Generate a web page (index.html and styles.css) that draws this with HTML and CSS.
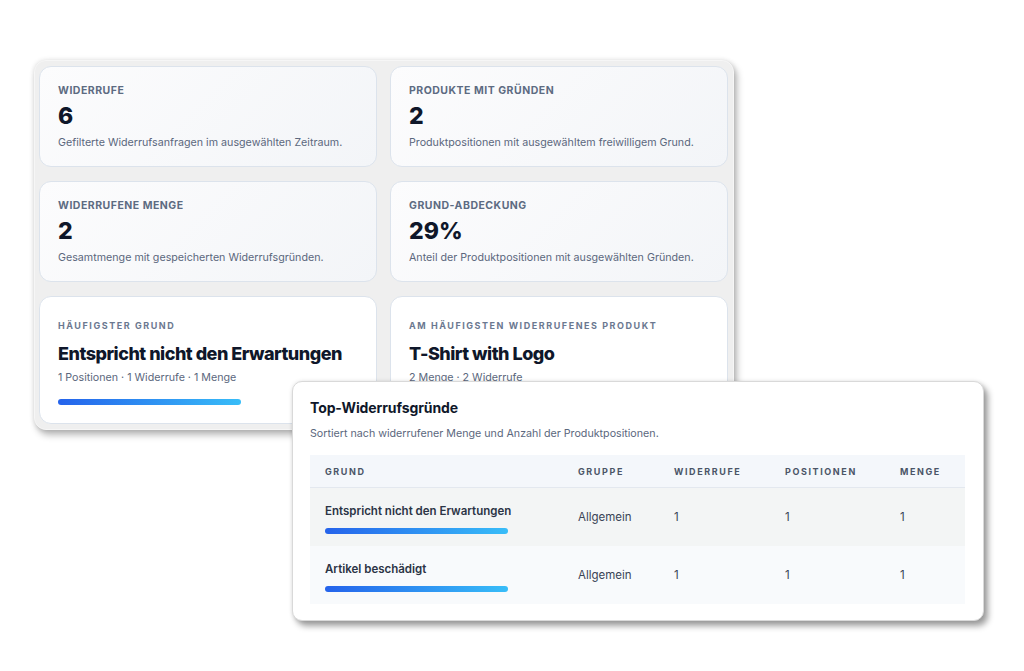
FILE: index.html
```html
<!DOCTYPE html>
<html lang="de">
<head>
<meta charset="utf-8">
<title>Widerrufsgründe – Übersicht</title>
<link rel="stylesheet" href="styles.css">
</head>
<body>
	<div class="stage">
		<!-- Kennzahlen-Fenster -->
		<div class="window window-stats">
			<div class="stats">
				<div class="card">
					<div class="card-label">Widerrufe</div>
					<div class="card-value">6</div>
					<div class="card-desc">Gefilterte Widerrufsanfragen im ausgewählten Zeitraum.</div>
				</div>
				<div class="card">
					<div class="card-label">Produkte mit Gründen</div>
					<div class="card-value">2</div>
					<div class="card-desc">Produktpositionen mit ausgewähltem freiwilligem Grund.</div>
				</div>
				<div class="card">
					<div class="card-label">Widerrufene Menge</div>
					<div class="card-value">2</div>
					<div class="card-desc">Gesamtmenge mit gespeicherten Widerrufsgründen.</div>
				</div>
				<div class="card">
					<div class="card-label">Grund-Abdeckung</div>
					<div class="card-value">29%</div>
					<div class="card-desc">Anteil der Produktpositionen mit ausgewählten Gründen.</div>
				</div>
				<div class="card card-top">
					<div class="top-label">Häufigster Grund</div>
					<div class="top-title">Entspricht nicht den Erwartungen</div>
					<div class="top-meta">1 Positionen · 1 Widerrufe · 1 Menge</div>
					<div class="bar"></div>
				</div>
				<div class="card card-top">
					<div class="top-label">Am häufigsten widerrufenes Produkt</div>
					<div class="top-title">T-Shirt with Logo</div>
					<div class="top-meta">2 Menge · 2 Widerrufe</div>
				</div>
			</div>
		</div>

		<!-- Tabelle Top-Gründe -->
		<div class="window window-table">
			<h2 class="table-title">Top-Widerrufsgründe</h2>
			<p class="table-sub">Sortiert nach widerrufener Menge und Anzahl der Produktpositionen.</p>
			<div class="table">
				<div class="trow thead">
					<div>Grund</div>
					<div>Gruppe</div>
					<div>Widerrufe</div>
					<div>Positionen</div>
					<div>Menge</div>
				</div>
				<div class="trow tbody odd">
					<div class="reason-cell">
						<div class="reason">Entspricht nicht den Erwartungen</div>
						<div class="bar bar-row"></div>
					</div>
					<div>Allgemein</div>
					<div>1</div>
					<div>1</div>
					<div>1</div>
				</div>
				<div class="trow tbody even">
					<div class="reason-cell">
						<div class="reason">Artikel beschädigt</div>
						<div class="bar bar-row"></div>
					</div>
					<div>Allgemein</div>
					<div>1</div>
					<div>1</div>
					<div>1</div>
				</div>
			</div>
		</div>
	</div>
</body>
</html>
```

FILE: styles.css
```css
html, body {
 margin: 0;
 padding: 0;
 background: #fff;
 font-family: Inter, "Liberation Sans", sans-serif;
 color: #0f172a;
 overflow: hidden;
}
.stage {
 position: relative;
 width: 1024px;
 height: 671px;
}
.window {
 position: absolute;
 box-sizing: border-box;
}

/* hinteres Fenster mit Kennzahlen */
.window-stats {
 left: 34px;
 top: 60px;
 width: 700px;
 height: 370px;
 background: #efefef;
 border: 1px solid #f6f6f6;
 border-radius: 12px;
 box-shadow: 0 0 5px rgba(0,0,0,.12), 3px 5px 7px rgba(0,0,0,.28);
 overflow: hidden;
}
.stats {
 display: grid;
 grid-template-columns: 338px 338px;
 grid-template-rows: 101px 101px 128px;
 column-gap: 13px;
 row-gap: 14px;
 padding: 5px 0 0 4px;
}
.card {
 box-sizing: border-box;
 border: 1px solid #dce3ec;
 border-radius: 12px;
 background: linear-gradient(135deg, #fcfcfd 0%, #f3f5f8 100%);
 padding: 18px 18px 0 18px;
}
.card-label {
 font-size: 10.5px;
 line-height: 12px;
 font-weight: 700;
 letter-spacing: 0.5px;
 text-transform: uppercase;
 color: #5d6b82;
}
.card-value {
 margin-top: 5px;
 font-size: 23px;
 line-height: 28px;
 font-weight: 800;
 color: #0f172a;
}
.card-desc {
 margin-top: 5px;
 font-size: 10.7px;
 line-height: 15px;
 color: #5b677d;
}
.card-top {
 background: #fff;
 padding-top: 23px;
}
.top-label {
 font-size: 9px;
 line-height: 12px;
 font-weight: 700;
 letter-spacing: 1.55px;
 text-transform: uppercase;
 color: #6b7890;
}
.top-title {
 margin-top: 10px;
 font-size: 18px;
 line-height: 24px;
 font-weight: 800;
 letter-spacing: -0.5px;
 color: #0f172a;
}
.top-meta {
 margin-top: 4px;
 font-size: 10.7px;
 line-height: 15px;
 color: #5b677d;
}
.bar {
 margin-top: 14px;
 width: 183px;
 height: 6px;
 border-radius: 3px;
 background: linear-gradient(90deg, #2563eb 0%, #38bdf8 100%);
}

/* vorderes Fenster mit Tabelle */
.window-table {
 left: 292px;
 top: 381px;
 width: 692px;
 height: 240px;
 background: #fff;
 border: 1px solid #d9d9d9;
 border-radius: 10px;
 box-shadow: 0 0 4px rgba(0,0,0,.1), 4px 5px 6px rgba(0,0,0,.38);
 padding: 16px 18px 0 17px;
}
.table-title {
 margin: 0;
 font-size: 14px;
 line-height: 20px;
 font-weight: 700;
 letter-spacing: -0.1px;
 color: #0f172a;
}
.table-sub {
 margin: 8px 0 0;
 font-size: 10.7px;
 line-height: 15px;
 color: #5b677d;
}
.table {
 margin-top: 14px;
 width: 655px;
}
.trow {
 display: grid;
 grid-template-columns: 253px 96px 111px 115px 80px;
 align-items: center;
}
.trow > div {
 padding-left: 15px;
}
.thead {
 height: 33px;
 background: #f4f7fb;
 border-bottom: 1px solid #e3e8ef;
 box-sizing: border-box;
 font-size: 9px;
 font-weight: 700;
 letter-spacing: 1.6px;
 text-transform: uppercase;
 color: #4b5567;
}
.tbody {
 height: 58px;
 font-size: 11.5px;
 color: #3a4456;
}
.tbody.odd { background: #f3f5f5; }
.tbody.even { background: #f8fafc; }
.trow > .reason-cell {
 padding-top: 4px;
}
.reason {
 font-weight: 600;
 line-height: 15px;
 color: #2b3445;
}
.bar-row {
 margin-top: 9px;
}
```
